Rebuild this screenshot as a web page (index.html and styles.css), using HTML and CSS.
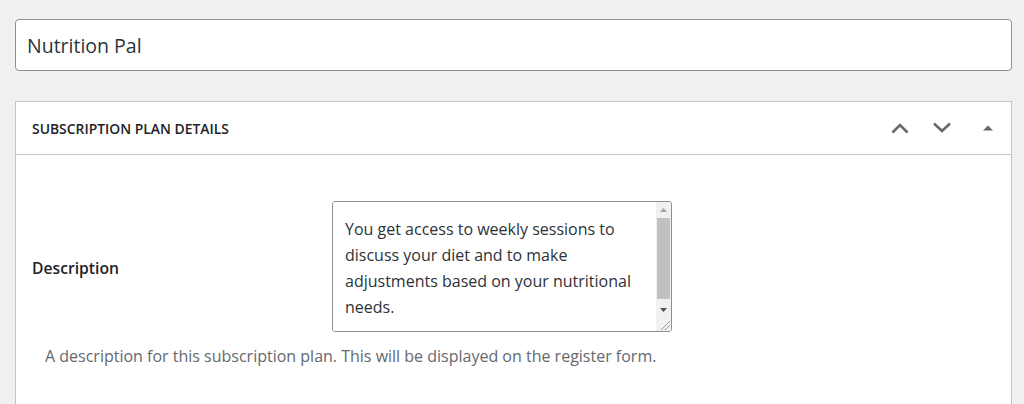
FILE: index.html
```html
<!DOCTYPE html>
<html lang="en">
<head>
    <meta charset="UTF-8">
    <meta name="viewport" content="width=device-width, initial-scale=1.0">
    <title>Edit Subscription Plan</title>
    <link rel="stylesheet" href="styles.css">
</head>
<body>

    <div class="wrap">
        <!-- Plan title -->
        <input type="text" class="plan-title" name="post_title" value="Nutrition Pal">

        <!-- Subscription plan details box -->
        <div class="postbox">
            <div class="postbox-header">
                <h2>Subscription Plan Details</h2>
                <div class="handle-actions">
                    <button class="handle-btn" type="button" aria-label="Move up">
                        <svg width="20" height="12" viewBox="0 0 20 12"><path d="M2.5 10.5 L10 3 L17.5 10.5" fill="none" stroke="#646970" stroke-width="2.6"/></svg>
                    </button>
                    <button class="handle-btn" type="button" aria-label="Move down">
                        <svg width="20" height="12" viewBox="0 0 20 12"><path d="M2 1.5 L10 9 L18 1.5" fill="none" stroke="#646970" stroke-width="2.6"/></svg>
                    </button>
                    <button class="handle-btn toggle" type="button" aria-label="Toggle panel">
                        <svg width="10" height="6" viewBox="0 0 10 6"><path d="M0 5.5 L5 0.5 L10 5.5 Z" fill="#646970"/></svg>
                    </button>
                </div>
            </div>

            <div class="postbox-inside">
                <div class="field-row">
                    <label for="plan-description">Description</label>
                    <div class="textarea-box">
                        <textarea id="plan-description" name="description">You get access to weekly sessions to discuss your diet and to make adjustments based on your nutritional needs.</textarea>
                        <!-- classic scrollbar -->
                        <div class="scrollbar">
                            <div class="sb-btn">
                                <svg width="7" height="4" viewBox="0 0 7 4"><path d="M0 4 L3.5 0 L7 4 Z" fill="#a3a3a3"/></svg>
                            </div>
                            <div class="sb-track"><div class="sb-thumb"></div></div>
                            <div class="sb-btn">
                                <svg width="7" height="4" viewBox="0 0 7 4"><path d="M0 0 L3.5 4 L7 0 Z" fill="#505050"/></svg>
                            </div>
                            <div class="sb-corner">
                                <svg width="14" height="14" viewBox="0 0 14 14"><path d="M13 4 L4 13 M13 8 L8 13" stroke="#9a9a9a" stroke-width="1"/></svg>
                            </div>
                        </div>
                    </div>
                </div>
                <p class="field-help">A description for this subscription plan. This will be displayed on the register form.</p>
            </div>
        </div>
    </div>

</body>
</html>
```

FILE: styles.css
```css
/* Basic reset */
* {
    margin: 0;
    padding: 0;
    box-sizing: border-box;
}

body {
    font-family: "Open Sans", "Noto Sans", Arial, sans-serif;
    background: #f0f0f1;
    color: #1d2327;
    height: 404px;
    overflow: hidden;
}

.wrap {
    padding: 19px 12px 0 15px;
}

/* Title field */
.plan-title {
    display: block;
    width: 100%;
    height: 52px;
    padding: 0 11px;
    font-family: inherit;
    font-size: 19.5px;
    color: #2c3338;
    background: #fff;
    border: 1px solid #8c8f94;
    border-radius: 4px;
    outline: none;
}

/* Postbox */
.postbox {
    margin-top: 30px;
    background: #fff;
    border: 1px solid #c3c4c7;
    height: 320px;
}

.postbox-header {
    display: flex;
    align-items: center;
    justify-content: space-between;
    height: 53px;
    border-bottom: 1px solid #c3c4c7;
    padding-left: 16px;
}

.postbox-header h2 {
    font-size: 13.9px;
    font-weight: 600;
    text-transform: uppercase;
    color: #1d2327;
}

.handle-actions {
    display: flex;
    align-items: center;
    padding-right: 18px;
}

.handle-btn {
    display: flex;
    align-items: center;
    justify-content: center;
    width: 20px;
    height: 20px;
    margin-left: 22px;
    background: none;
    border: none;
    cursor: pointer;
}

.handle-btn.toggle {
    width: 10px;
    margin-left: 31px;
}

/* Inside */
.postbox-inside {
    padding: 46px 16px 0 16px;
}

.field-row {
    display: flex;
    align-items: center;
}

.field-row label {
    width: 300px;
    padding-top: 3px;
    font-size: 15.7px;
    font-weight: 600;
    color: #1d2327;
}

.textarea-box {
    display: flex;
    width: 340px;
    height: 131px;
    background: #fff;
    border: 1px solid #8c8f94;
    border-radius: 3px;
    overflow: hidden;
}

.textarea-box textarea {
    flex: 1;
    padding: 14px 10px 14px 12px;
    font-family: inherit;
    font-size: 16px;
    line-height: 26px;
    color: #2c3338;
    border: none;
    resize: none;
    overflow: hidden;
    outline: none;
}

/* Fake classic scrollbar */
.scrollbar {
    display: flex;
    flex-direction: column;
    width: 15px;
    background: #f1f1f1;
}

.sb-btn {
    display: flex;
    align-items: center;
    justify-content: center;
    height: 15px;
}

.sb-track {
    flex: 1;
    padding: 1px 1px 3px 1px;
}

.sb-thumb {
    height: 100%;
    background: #c1c1c1;
}

.sb-corner {
    height: 14px;
    display: flex;
    align-items: flex-end;
    justify-content: flex-end;
}

.sb-corner svg {
    display: block;
}

.field-help {
    margin: 13px 0 0 13px;
    font-size: 16px;
    color: #646970;
}
```
